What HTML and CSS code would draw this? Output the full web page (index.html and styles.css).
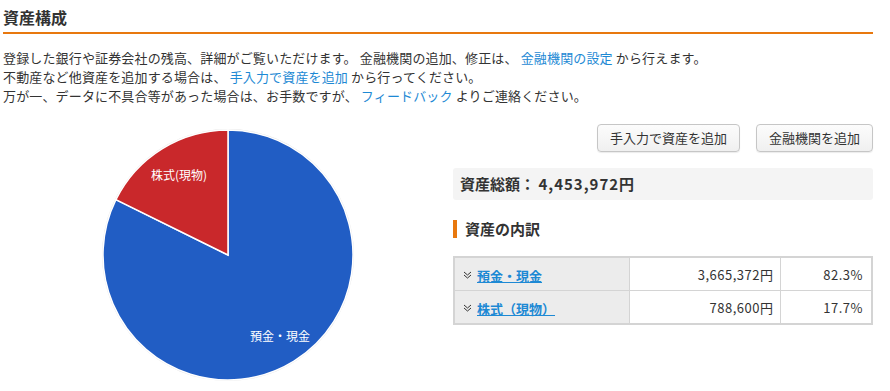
FILE: index.html
```html
<!DOCTYPE html>
<html lang="ja">

<head>
    <meta charset="UTF-8">
    <title>資産構成</title>
    <link rel="stylesheet" href="styles.css">
</head>

<body>
    <div class="page">
        <h1 class="page-title">資産構成</h1>
        <div class="intro">
            <p>登録した銀行や証券会社の残高、詳細がご覧いただけます。 金融機関の追加、修正は、 <a href="javascript:;">金融機関の設定</a> から行えます。</p>
            <p>不動産など他資産を追加する場合は、 <a href="javascript:;">手入力で資産を追加</a> から行ってください。</p>
            <p>万が一、データに不具合等があった場合は、お手数ですが、 <a href="javascript:;">フィードバック</a> よりご連絡ください。</p>
        </div>

        <div class="main">
            <!-- 円グラフ -->
            <div class="chart">
                <svg width="256" height="256" viewBox="0 0 256 256">
                    <circle cx="128" cy="128" r="126" fill="#e4e4e4" />
                    <path d="M128 128 L128 3 A125 125 0 1 1 15.9 72.7 Z" fill="#215dc4" stroke="#fff" stroke-width="1.5" />
                    <path d="M128 128 L15.9 72.7 A125 125 0 0 1 128 3 Z" fill="#c9282b" stroke="#fff" stroke-width="1.5" />
                    <text x="79" y="53" class="pie-label" text-anchor="middle">株式(現物)</text>
                    <text x="180" y="214" class="pie-label" text-anchor="middle">預金・現金</text>
                </svg>
            </div>

            <div class="side">
                <div class="buttons">
                    <a href="javascript:;" class="btn">手入力で資産を追加</a>
                    <a href="javascript:;" class="btn">金融機関を追加</a>
                </div>
                <div class="total">資産総額： <span class="num">4,453,972円</span></div>
                <h2 class="sub-title">資産の内訳</h2>
                <table class="breakdown">
                    <colgroup>
                        <col class="col-name">
                        <col class="col-amount">
                        <col>
                    </colgroup>
                    <tr>
                        <th><span class="chev"><svg width="9" height="8" viewBox="0 0 9 8"><polyline points="1,1 4.5,4 8,1" /><polyline points="1,4 4.5,7 8,4" /></svg></span><a href="javascript:;">預金・現金</a></th>
                        <td class="amount">3,665,372円</td>
                        <td class="ratio">82.3%</td>
                    </tr>
                    <tr>
                        <th><span class="chev"><svg width="9" height="8" viewBox="0 0 9 8"><polyline points="1,1 4.5,4 8,1" /><polyline points="1,4 4.5,7 8,4" /></svg></span><a href="javascript:;">株式（現物）</a></th>
                        <td class="amount">788,600円</td>
                        <td class="ratio">17.7%</td>
                    </tr>
                </table>
            </div>
        </div>
    </div>
</body>

</html>
```

FILE: styles.css
```css
* {
    padding: 0;
    margin: 0;
}

body {
    font-family: "Noto Sans CJK JP", "Noto Sans", sans-serif;
    font-size: 13px;
    color: #333;
    background: #fff;
}

a {
    text-decoration: none;
    color: #1d89d4;
}

.page {
    width: 870px;
    padding-left: 3px;
}

.page-title {
    /* オレンジの下線 */
    font-size: 16px;
    line-height: 18px;
    padding: 8px 0 6px 0;
    border-bottom: 2px solid #e8780e;
    color: #333;
}

.intro {
    margin-top: 14px;
    line-height: 19px;
    letter-spacing: 0.15px;
}

.main {
    display: flex;
}

.chart {
    width: 450px;
    display: flex;
    justify-content: center;
    padding-top: 22px;
}

.pie-label {
    fill: #fff;
    font-size: 12px;
    font-family: "Noto Sans CJK JP", sans-serif;
}

.side {
    flex: 1;
    padding-top: 19px;
}

.buttons {
    display: flex;
    justify-content: flex-end;
    gap: 16px;
}

.btn {
    display: block;
    height: 28px;
    line-height: 26px;
    padding: 0 12px;
    border: 1px solid #c6c6c6;
    border-radius: 4px;
    background: linear-gradient(#fcfcfc, #f0f0f0);
    box-shadow: 0 1px 1px rgba(0, 0, 0, .08);
    color: #333;
    box-sizing: border-box;
}

.total {
    margin-top: 16px;
    height: 32px;
    line-height: 32px;
    padding: 0 7px;
    background: #f4f4f4;
    border-radius: 3px;
    font-size: 15px;
    font-weight: bold;
}

.total .num {
    letter-spacing: 1px;
}

.sub-title {
    margin-top: 20px;
    height: 18px;
    line-height: 18px;
    border-left: 4px solid #e8780e;
    padding-left: 8px;
    font-size: 15px;
}

.breakdown {
    margin-top: 18px;
    width: 100%;
    table-layout: fixed;
    border-collapse: collapse;
    border: 2px solid #d4d4d4;
}

.col-name {
    width: 175px;
}

.col-amount {
    width: 151px;
}

.breakdown th,
.breakdown td {
    height: 32px;
    border: 1px solid #d4d4d4;
    font-weight: normal;
}

.breakdown th {
    text-align: left;
    background: #ececec;
    padding-left: 8px;
}

.breakdown th a {
    font-weight: bold;
    text-decoration: underline;
}

.chev {
    display: inline-block;
    width: 14px;
    vertical-align: 2px;
}

.chev polyline {
    fill: none;
    stroke: #333;
    stroke-width: 1;
}

.amount,
.ratio {
    text-align: right;
    letter-spacing: 0.5px;
}

.amount {
    padding-right: 6px;
}

.ratio {
    padding-right: 8px;
}
```
